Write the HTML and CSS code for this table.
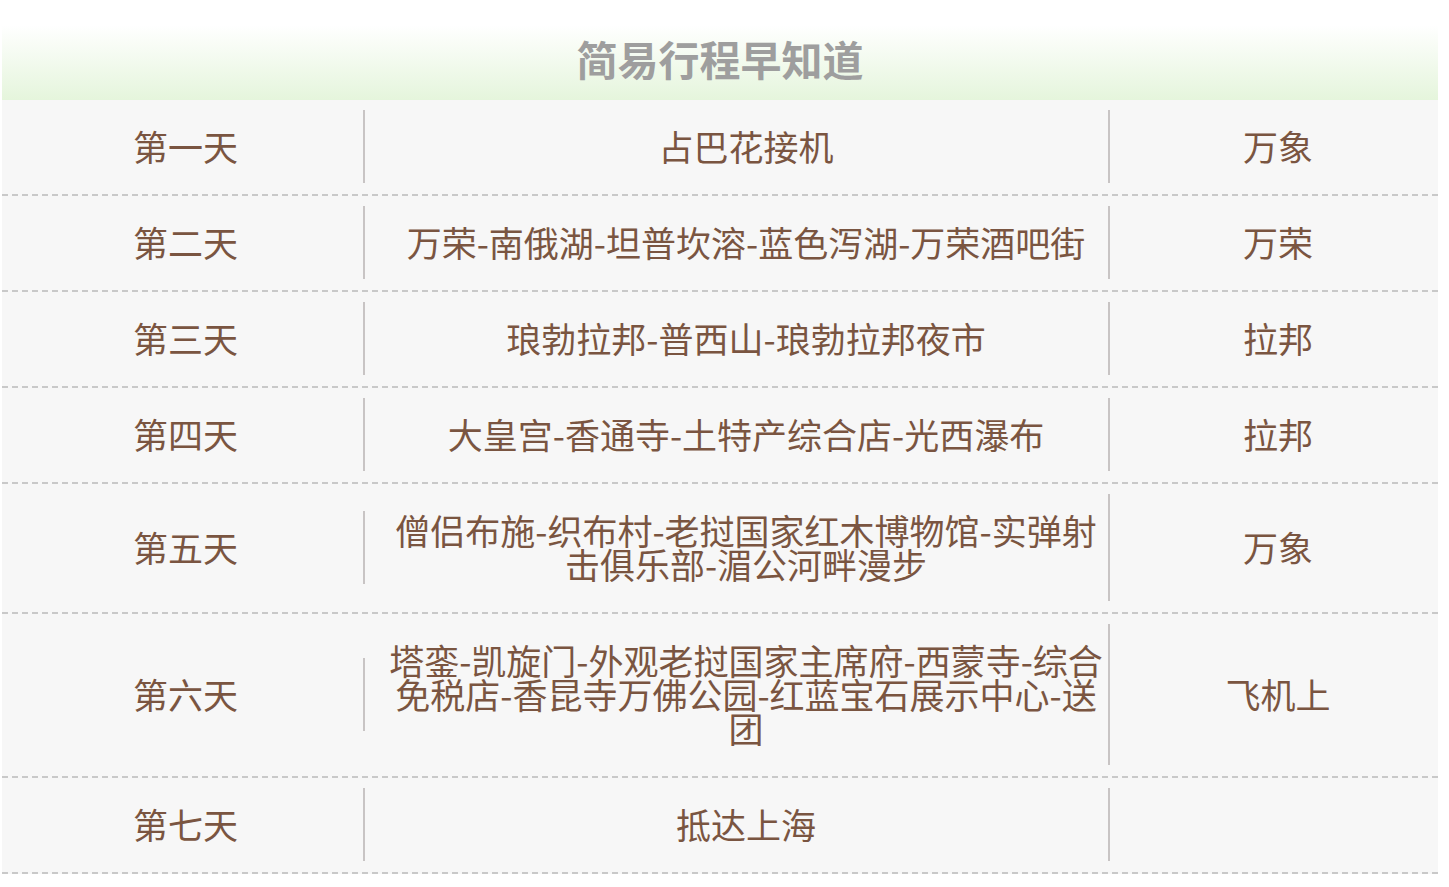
FILE: index.html
```html
<!DOCTYPE html>
<html lang="zh-CN">
<head>
<meta charset="utf-8">
<title>简易行程早知道</title>
<link rel="stylesheet" href="styles.css">
</head>
<body>
<div class="plan">
  <div class="plan-head"><h2 class="plan-title">简易行程早知道</h2></div>
  <div class="plan-body">
    <div class="row">
      <div class="c1"><div class="in">第一天</div></div>
      <div class="c2"><div class="in">占巴花接机</div></div>
      <div class="c3"><div class="in">万象</div></div>
    </div>
    <div class="row">
      <div class="c1"><div class="in">第二天</div></div>
      <div class="c2"><div class="in">万荣-南俄湖-坦普坎溶-蓝色泻湖-万荣酒吧街</div></div>
      <div class="c3"><div class="in">万荣</div></div>
    </div>
    <div class="row">
      <div class="c1"><div class="in">第三天</div></div>
      <div class="c2"><div class="in">琅勃拉邦-普西山-琅勃拉邦夜市</div></div>
      <div class="c3"><div class="in">拉邦</div></div>
    </div>
    <div class="row">
      <div class="c1"><div class="in">第四天</div></div>
      <div class="c2"><div class="in">大皇宫-香通寺-土特产综合店-光西瀑布</div></div>
      <div class="c3"><div class="in">拉邦</div></div>
    </div>
    <div class="row">
      <div class="c1"><div class="in">第五天</div></div>
      <div class="c2"><div class="in">僧侣布施-织布村-老挝国家红木博物馆-实弹射击俱乐部-湄公河畔漫步</div></div>
      <div class="c3"><div class="in">万象</div></div>
    </div>
    <div class="row">
      <div class="c1"><div class="in">第六天</div></div>
      <div class="c2"><div class="in">塔銮-凯旋门-外观老挝国家主席府-西蒙寺-综合免税店-香昆寺万佛公园-红蓝宝石展示中心-送团</div></div>
      <div class="c3"><div class="in">飞机上</div></div>
    </div>
    <div class="row">
      <div class="c1"><div class="in">第七天</div></div>
      <div class="c2"><div class="in">抵达上海</div></div>
      <div class="c3"><div class="in"></div></div>
    </div>
  </div>
</div>
</body>
</html>
```
FILE: styles.css
```css
html, body {
  margin: 0;
  padding: 0;
  background: #ffffff;
}
body {
  font-family: "Noto Sans CJK SC", "Noto Sans", sans-serif;
}
.plan {
  width: 1436px;
  margin-left: 2px;
}
.plan-head {
  height: 100px;
  background: linear-gradient(to bottom, #ffffff 25%, #e5f5dc 100%);
  display: flex;
  align-items: flex-end;
  justify-content: center;
}
.plan-title {
  margin: 0 0 18px 0;
  font-size: 41px;
  line-height: 48px;
  font-weight: 700;
  color: #9e9e9e;
}
.plan-body {
  background: #f7f7f7;
}
.row {
  display: grid;
  grid-template-columns: 363px 745px 1fr;
  align-items: center;
  padding: 10px 0 11px 0;
  border-bottom: 2px dashed #c9c9c9;
  color: #7a5541;
  font-size: 35px;
  line-height: 34px;
  text-align: center;
}
.in {
  padding: 19px 0 20px 0;
  min-height: 34px;
}
.c1 {
  padding-left: 6px;
}
.c1 .in {
  border-right: 2px solid #c8c4c4;
}
.c2 {
  padding-left: 19px;
}
.c2 .in {
  padding-left: 2px;
  padding-right: 2px;
  border-right: 2px solid #c8c4c4;
}
.c3 {
  padding-left: 19px;
  padding-right: 11px;
}
```
